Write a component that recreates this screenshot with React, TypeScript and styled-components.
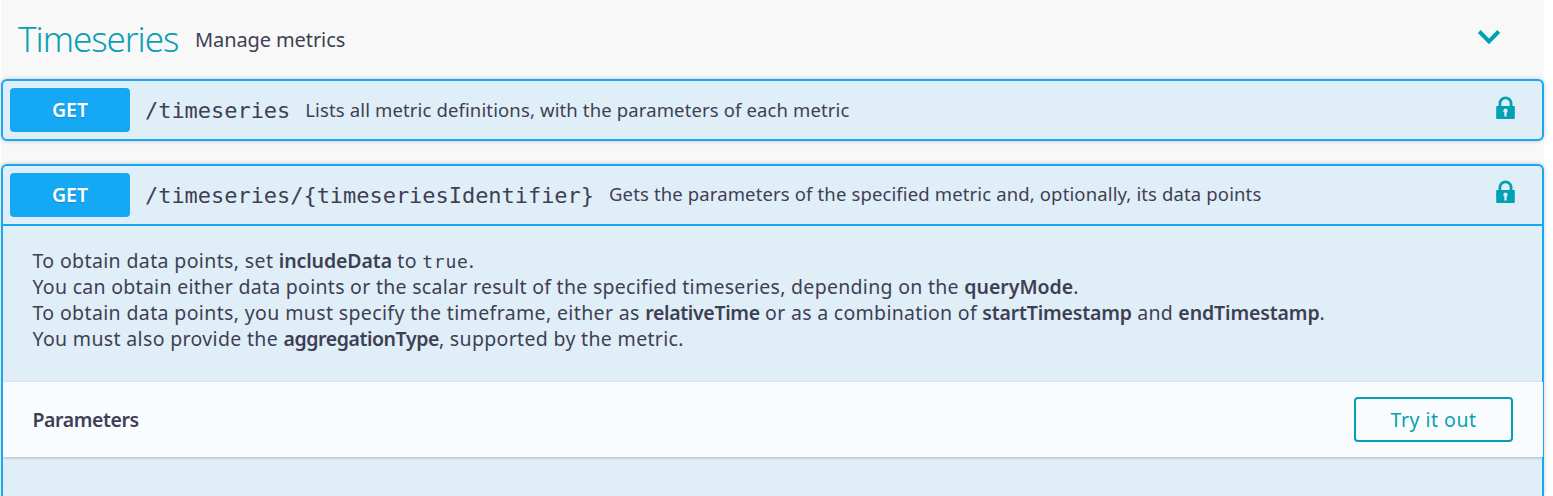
import React from "react";
import styled, { createGlobalStyle } from "styled-components";

const sans = `"Noto Sans", "Open Sans", sans-serif`;
const mono = `"DejaVu Sans Mono", monospace`;
const blue = "#14a8f5";
const teal = "#00a1b2";

const GlobalStyle = createGlobalStyle`
  * { box-sizing: border-box; }
  html, body { margin: 0; background: #fff; overflow: hidden; }
`;

const Page = styled.main`
  width: 1543px;
  height: 496px;
  margin-left: 1px;
  display: flex;
  flex-direction: column;
  background: #f8f8f8;
  color: #3e3f54;
  font-family: ${sans};
  white-space: nowrap;
`;

const TagHeader = styled.header`
  height: 79px;
  flex: none;
  display: flex;
  align-items: flex-start;
  padding: 0 43px 0 17px;
`;

const TagName = styled.h2`
  margin: 0;
  width: 177px;
  font-size: 35px;
  font-weight: 300;
  line-height: 77px;
  letter-spacing: -1.05px;
  color: #0b9fb1;
`;

const TagDescription = styled.span`
  flex: 1;
  font-size: 20px;
  line-height: 79px;
  letter-spacing: -0.1px;
`;

const Chevron = styled.svg`
  margin-top: 29px;
`;

const Operation = styled.section<{ $open?: boolean }>`
  flex: none;
  height: ${(p) => (p.$open ? "332px" : "62px")};
  margin-bottom: ${(p) => (p.$open ? "0" : "23px")};
  border: 2px solid ${blue};
  border-bottom-width: ${(p) => (p.$open ? "0" : "2px")};
  border-radius: ${(p) => (p.$open ? "6px 6px 0 0" : "6px")};
  background: #e0eef7;
  box-shadow: 0 0 4px rgba(0, 0, 0, 0.22);
`;

const Summary = styled.div<{ $open?: boolean }>`
  height: ${(p) => (p.$open ? "60px" : "58px")};
  display: flex;
  align-items: center;
  padding: 0 27px 0 7px;
  border-bottom: ${(p) => (p.$open ? `2px solid ${blue}` : "none")};
`;

const Method = styled.span`
  width: 120px;
  height: 44px;
  border-radius: 4px;
  background: ${blue};
  color: #fff;
  font-size: 19.5px;
  font-weight: 600;
  line-height: 43px;
  text-align: center;
  text-shadow: 0 1px 1px rgba(0, 0, 0, 0.18);
`;

const Path = styled.span`
  margin: 1px 0 0 15px;
  font: 22px/30px ${mono};
  letter-spacing: -0.04px;
`;

const SummaryText = styled.span<{ $lift?: boolean }>`
  flex: 1;
  margin-left: 15px;
  padding-bottom: ${(p) => (p.$lift ? "2px" : "0")};
  font-size: 18.5px;
  line-height: 28px;
  letter-spacing: 0.13px;
`;

const Lock = styled.svg<{ $lift?: boolean }>`
  margin-bottom: ${(p) => (p.$lift ? "6px" : "4px")};
`;

const Description = styled.div`
  height: 156px;
  padding: 22px 30px 0 29.5px;
  font-size: 19.5px;
  line-height: 26px;
`;

const Line = styled.p`
  margin: 0;
  height: 26px;
  white-space: pre;
`;

const Run = styled.span<{ $track: number }>`
  letter-spacing: ${(p) => p.$track}px;
`;

const Strong = styled.strong<{ $track: number }>`
  font-weight: 600;
  letter-spacing: ${(p) => p.$track}px;
`;

const Code = styled.code`
  font: 18px/20px ${mono};
  letter-spacing: 0.8px;
`;

const SectionHeader = styled.div`
  height: 75px;
  margin-right: -1px;
  display: flex;
  align-items: center;
  justify-content: space-between;
  padding: 0 30px 0 29.5px;
  background: #f9fcff;
  box-shadow: 0 1px 3px rgba(0, 0, 0, 0.22);
  clip-path: inset(-4px 0 -6px 0);
`;

const SectionTitle = styled.h4`
  margin: 0;
  font-size: 19.5px;
  font-weight: 600;
  letter-spacing: -0.42px;
`;

const TryButton = styled.button`
  width: 159px;
  height: 45px;
  padding: 0 0 1px;
  border: 2px solid ${teal};
  border-radius: 4px;
  background: transparent;
  color: #0b9fb1;
  font: 19.5px ${sans};
  letter-spacing: 0.5px;
`;

function LockIcon({ lift }: { lift?: boolean }) {
  return (
    <Lock $lift={lift} width="19" height="24" viewBox="0 0 19 24" fill={teal}>
      <path d="M3.9 11V7.4a5.6 5.6 0 0 1 11.2 0V11" fill="none" stroke={teal} strokeWidth="2.8" />
      <path
        fillRule="evenodd"
        d="M1 10h17q.8 0 .8 .8v11.4q0 .8-.8 .8h-17q-.8 0-.8-.8V10.800q0-.8 .8-.8zM9.500 12.6a2.200 2.200 0 0 0-1.100 4.100V20.500h2.200v-3.800a2.200 2.200 0 0 0-1.100-4.100z"
      />
    </Lock>
  );
}

export default function App() {
  return (
    <>
      <GlobalStyle />
      <Page>
        <TagHeader>
          <TagName>Timeseries</TagName>
          <TagDescription>Manage metrics</TagDescription>
          <Chevron width="24" height="17" viewBox="0 0 24 17">
            <path d="M2.3 2.5L12 12.3L21.7 2.5" fill="none" stroke={teal} strokeWidth="4" />
          </Chevron>
        </TagHeader>

        <Operation>
          <Summary>
            <Method>GET</Method>
            <Path>/timeseries</Path>
            <SummaryText>Lists all metric definitions, with the parameters of each metric</SummaryText>
            <LockIcon />
          </Summary>
        </Operation>

        <Operation $open>
          <Summary $open>
            <Method>GET</Method>
            <Path>{"/timeseries/{timeseriesIdentifier}"}</Path>
            <SummaryText $lift>
              Gets the parameters of the specified metric and, optionally, its data points
            </SummaryText>
            <LockIcon lift />
          </Summary>
          <Description>
            <Line>
              <Run $track={0.37}>To obtain data points, set </Run>
              <Strong $track={-0.1}>includeData</Strong>
              <Run $track={0.3}> to </Run>
              <Code>true</Code>.
            </Line>
            <Line>
              <Run $track={0.287}>
                You can obtain either data points or the scalar result of the specified timeseries, depending on the{" "}
              </Run>
              <Strong $track={0}>queryMode</Strong>.
            </Line>
            <Line>
              <Run $track={0.37}>To obtain data points, you must specify the timeframe, either as </Run>
              <Strong $track={-0.35}>relativeTime</Strong>
              <Run $track={0.3}> or as a combination of </Run>
              <Strong $track={-0.17}>startTimestamp</Strong>
              <Run $track={0.28}> and </Run>
              <Strong $track={-0.13}>endTimestamp</Strong>.
            </Line>
            <Line>
              <Run $track={0.342}>You must also provide the </Run>
              <Strong $track={-0.43}>aggregationType</Strong>
              <Run $track={0.33}>, supported by the metric.</Run>
            </Line>
          </Description>
          <SectionHeader>
            <SectionTitle>Parameters</SectionTitle>
            <TryButton>Try it out</TryButton>
          </SectionHeader>
        </Operation>
      </Page>
    </>
  );
}
